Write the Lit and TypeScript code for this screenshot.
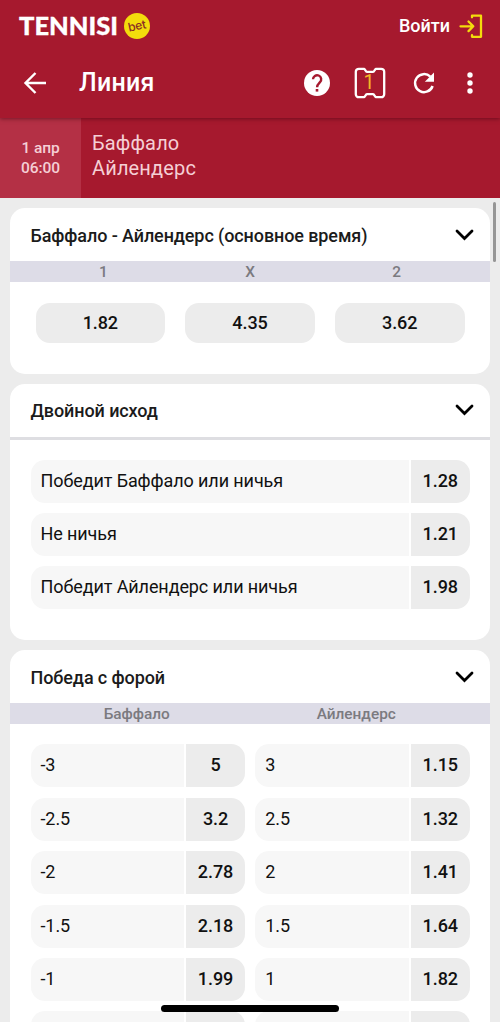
import { LitElement, html, css, svg } from "lit";
import { customElement, property } from "lit/decorators.js";

@customElement("odds-row")
class OddsRow extends LitElement {
  @property() label = "";
  @property() value = "";
  static styles = css`
    :host { display: flex; gap: 2px; width: 100%; height: 43px; border-radius: 14px; overflow: hidden; min-width: 0; }
    .label { flex: 1; background: #f7f7f7; padding-left: 10px; font-size: 18px; line-height: 42px; white-space: nowrap; letter-spacing: -0.1px; }
    .value { width: 58.5px; background: #ececec; text-align: center; font-size: 18px; font-weight: 500; line-height: 42px; letter-spacing: -0.1px; }
  `;
  render() {
    return html`<div class="label">${this.label}</div><div class="value">${this.value}</div>`;
  }
}

@customElement("market-card")
class MarketCard extends LitElement {
  @property() heading = "";
  @property({ attribute: false }) columns: string[] = [];
  static styles = css`
    :host { display: block; background: #fff; border-radius: 15px; overflow: hidden; }
    .head { display: flex; align-items: center; justify-content: space-between; height: 52.5px; padding: 0 15px 0 20.5px; box-sizing: border-box; font-size: 18px; font-weight: 500; color: #1b1b1b; }
    .title { padding-top: 1px; letter-spacing: -0.1px; white-space: nowrap; }
    .chevron { width: 21px; height: 14px; }
    .band { display: flex; height: 21.5px; background: #dddce7; color: #7b7a80; font-size: 15.4px; font-weight: 500; line-height: 22.5px; text-align: center; padding: 0 20px; }
    .band span { flex: 1; }
    .band.two { padding: 0 24px 0 17px; }
    .rule { height: 3px; background: #dedee2; }
  `;
  render() {
    return html`
      <div class="head">
        <span class="title">${this.heading}</span>
        <svg class="chevron" viewBox="0 0 21 14"><path d="M3 3l7.5 7.5L18 3" fill="none" stroke="#000" stroke-width="2.8" stroke-linecap="round" stroke-linejoin="miter" /></svg>
      </div>
      ${this.columns.length
        ? html`<div class="band ${this.columns.length === 2 ? "two" : ""}">${this.columns.map((c) => html`<span>${c}</span>`)}</div>`
        : html`<div class="rule"></div>`}
      <slot></slot>
    `;
  }
}

const helpIcon = svg`<circle cx="13" cy="13" r="13" fill="#fff"/><path d="M9 9.300a4.100 4.100 0 1 1 7 2.900c-1.700 1.700-2.900 2.500-2.900 5" fill="none" stroke="#a6192e" stroke-width="2.400"/><rect x="11.700" y="19" width="2.600" height="2.600" fill="#a6192e"/>`;

@customElement("app-root")
class AppRoot extends LitElement {
  static styles = css`
    :host { display: block; position: relative; width: 500px; height: 1022px; overflow: hidden; background: #ececec; font-family: Roboto, sans-serif; color: #111; }
    .top { display: flex; justify-content: space-between; height: 52px; background: #a6192e; padding: 0 17px 0 18px; }
    .logo { width: 134px; height: 52px; }
    .word { font: 900 24px Lato, sans-serif; fill: #fff; }
    .bet { font: 500 12px Inter, sans-serif; fill: #8a2c24; }
    .login { display: flex; align-items: center; gap: 9px; color: #fff; font-size: 18px; font-weight: 500; }
    .login span { padding-bottom: 2px; }
    .login svg { width: 24px; height: 26px; }
    .nav { position: relative; display: flex; align-items: center; height: 66px; padding: 0 23px 5px; box-sizing: border-box; background: #a6192e; color: #fff; box-shadow: 0 1px 4px rgba(60, 0, 15, 0.5); clip-path: inset(0 0 -8px 0); }
    .back { width: 24px; height: 24px; }
    .page { flex: 1; padding-left: 32px; font-size: 25px; font-weight: 500; letter-spacing: 0.25px; }
    .actions { display: flex; align-items: center; }
    .help { width: 26px; height: 26px; margin-right: 24px; }
    .ticket { width: 32px; height: 34px; margin-right: 26px; }
    .count { font: 400 19.5px Roboto, sans-serif; fill: #f4ba26; }
    .reload { width: 24px; height: 24px; margin-right: 31px; }
    .more { width: 6px; height: 22px; margin-right: 4px; }
    .match { display: flex; height: 80px; background: #a6192e; color: #f5cfd5; }
    .date { display: flex; flex-direction: column; justify-content: center; width: 81px; background: #b43045; text-align: center; font-size: 15.5px; font-weight: 500; line-height: 20.5px; letter-spacing: -0.1px; }
    .teams { padding: 12.5px 0 0 11px; font-size: 20px; line-height: 25.5px; letter-spacing: 0.15px; }
    .cards { display: flex; flex-direction: column; gap: 10px; padding: 10.4px 10px 0; }
    .three { display: flex; gap: 20px; padding: 20.4px 25.5px 31px; }
    .pill { flex: 1; height: 40.3px; border-radius: 14px; background: #ececec; text-align: center; font-size: 18px; font-weight: 500; line-height: 39px; letter-spacing: -0.1px; }
    .list { display: flex; flex-direction: column; gap: 10.4px; padding: 20px 20.5px 31px; }
    .pair { display: flex; gap: 10.5px; }
    .scroll { position: absolute; top: 202px; right: 4px; width: 3.5px; height: 60px; border-radius: 2px; background: #969696; }
    .home { position: absolute; left: 161px; top: 1005px; width: 178px; height: 7px; border-radius: 4px; background: #000; }
  `;

  private outcomes = [
    ["Победит Баффало или ничья", "1.28"],
    ["Не ничья", "1.21"],
    ["Победит Айлендерс или ничья", "1.98"],
  ];
  private handicaps = [
    ["-3", "5", "3", "1.15"],
    ["-2.5", "3.2", "2.5", "1.32"],
    ["-2", "2.78", "2", "1.41"],
    ["-1.5", "2.18", "1.5", "1.64"],
    ["-1", "1.99", "1", "1.82"],
    ["", "", "", ""],
  ];

  render() {
    return html`
      <header class="top">
        <svg class="logo" viewBox="0 0 134 52">
          <text class="word" x="1" y="34.6" stroke="#fff" stroke-width="0.3" textLength="99" lengthAdjust="spacingAndGlyphs">TENNISI</text>
          <circle cx="119" cy="26" r="13" fill="#f3dc0c" />
          <text class="bet" x="110" y="30" textLength="18" transform="rotate(-12 119 26)">bet</text>
        </svg>
        <div class="login">
          <span>Войти</span>
          <svg viewBox="0 0 24 26" fill="none" stroke="#f3dc0c" stroke-width="2.3" stroke-linejoin="round" stroke-linecap="round"><path d="M1.500 13.300h12M9.500 8.500l4.800 4.800-4.800 4.800" /><path d="M13 4.300V2.700h9v21.100H13V22.200" /></svg>
        </div>
      </header>
      <nav class="nav">
        <svg class="back" viewBox="0 0 24 24" fill="none" stroke="#fff" stroke-width="2.400"><path d="M23 12H3M12.500 2L2.500 12l10 10" /></svg>
        <div class="page">Линия</div>
        <div class="actions">
          <svg class="help" viewBox="0 0 26 26">${helpIcon}</svg>
          <svg class="ticket" viewBox="0 0 32 34">
            <path d="M4.800 2.800H10.300L12 5.200a1.500 1.500 0 0 0 1.200.6h5.600a1.500 1.500 0 0 0 1.200-.6L21.700 2.800H27.200a3 3 0 0 1 3 3V28.200a3 3 0 0 1-3 3H21.700L20 28.800a1.500 1.500 0 0 0-1.200-.6h-5.600a1.500 1.500 0 0 0-1.200.6L10.300 31.200H4.800a3 3 0 0 1-3-3V5.800a3 3 0 0 1 3-3z" fill="none" stroke="#fff" stroke-width="2.300" stroke-linejoin="round" />
            <text class="count" x="15" y="23" text-anchor="middle">1</text>
          </svg>
          <svg class="reload" viewBox="0 0 24 24"><path d="M20.600 15A9 9 0 1 1 18.300 5.600" fill="none" stroke="#fff" stroke-width="2.500" /><path d="M22 1.500V10.700H12.800z" fill="#fff" /></svg>
          <svg class="more" viewBox="0 0 6 22" fill="#fff"><circle cx="3" cy="3" r="2.700" /><circle cx="3" cy="11" r="2.700" /><circle cx="3" cy="19" r="2.700" /></svg>
        </div>
      </nav>
      <section class="match">
        <div class="date"><span>1 апр</span><span>06:00</span></div>
        <div class="teams"><div>Баффало</div><div>Айлендерс</div></div>
      </section>
      <main class="cards">
        <market-card heading="Баффало - Айлендерс (основное время)" .columns=${["1", "X", "2"]}>
          <div class="three">${["1.82", "4.35", "3.62"].map((v) => html`<div class="pill">${v}</div>`)}</div>
        </market-card>
        <market-card heading="Двойной исход">
          <div class="list">${this.outcomes.map(([l, v]) => html`<odds-row label=${l} value=${v}></odds-row>`)}</div>
        </market-card>
        <market-card heading="Победа с форой" .columns=${["Баффало", "Айлендерс"]}>
          <div class="list">
            ${this.handicaps.map(
              ([a, b, c, d]) => html`<div class="pair"><odds-row label=${a} value=${b}></odds-row><odds-row label=${c} value=${d}></odds-row></div>`
            )}
          </div>
        </market-card>
      </main>
      <div class="scroll"></div>
      <div class="home"></div>
    `;
  }
}
